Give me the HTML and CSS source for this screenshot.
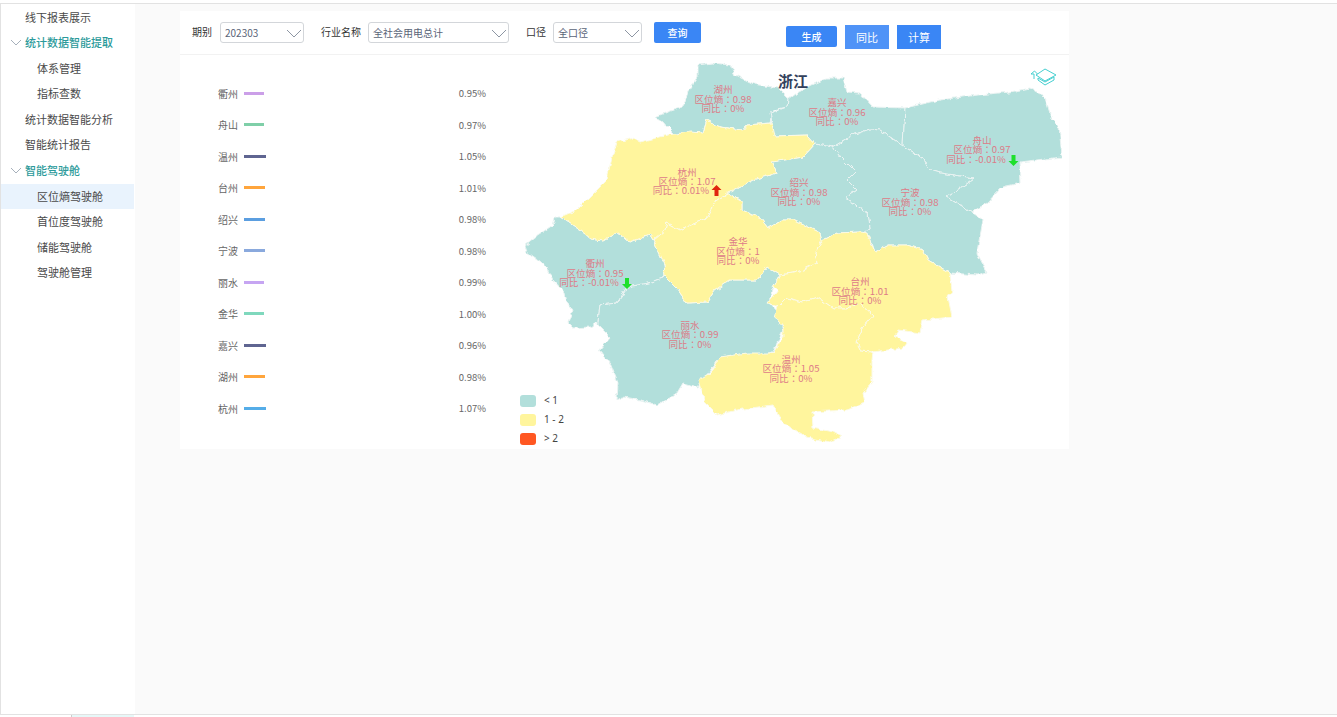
FILE: index.html
```html
<!DOCTYPE html>
<html lang="zh-CN">
<head>
<meta charset="utf-8">
<title>区位熵驾驶舱</title>
<link rel="stylesheet" href="styles.css">
</head>
<body>
<div class="frame">
  <nav class="sidebar">
    <div class="item">线下报表展示</div>
    <div class="item group"><svg class="caret" viewBox="0 0 12 7"><path d="M1 1l5 5 5-5"/></svg>统计数据智能提取</div>
    <div class="item sub">体系管理</div>
    <div class="item sub">指标查数</div>
    <div class="item">统计数据智能分析</div>
    <div class="item">智能统计报告</div>
    <div class="item group"><svg class="caret" viewBox="0 0 12 7"><path d="M1 1l5 5 5-5"/></svg>智能驾驶舱</div>
    <div class="item sub active">区位熵驾驶舱</div>
    <div class="item sub">首位度驾驶舱</div>
    <div class="item sub">储能驾驶舱</div>
    <div class="item sub">驾驶舱管理</div>
  </nav>
  <main class="main">
    <section class="panel">
      <header class="toolbar">
        <span class="lbl">期别</span>
        <div class="select w84">202303<svg class="chev" viewBox="0 0 16 9"><path d="M1 1l7 7 7-7"/></svg></div>
        <span class="lbl l2">行业名称</span>
        <div class="select w141">全社会用电总计<svg class="chev" viewBox="0 0 16 9"><path d="M1 1l7 7 7-7"/></svg></div>
        <span class="lbl l3">口径</span>
        <div class="select w89">全口径<svg class="chev" viewBox="0 0 16 9"><path d="M1 1l7 7 7-7"/></svg></div>
        <button class="btn query">查询</button>
        <div class="actions">
          <button class="btn gen">生成</button>
          <button class="btn square light">同比</button>
          <button class="btn square">计算</button>
        </div>
      </header>
      <div class="body">
        <ul class="legend">
          <li><span class="name">衢州</span><i class="bar c1"></i><span class="val">0.95%</span></li>
          <li><span class="name">舟山</span><i class="bar c2"></i><span class="val">0.97%</span></li>
          <li><span class="name">温州</span><i class="bar c3"></i><span class="val">1.05%</span></li>
          <li><span class="name">台州</span><i class="bar c4"></i><span class="val">1.01%</span></li>
          <li><span class="name">绍兴</span><i class="bar c5"></i><span class="val">0.98%</span></li>
          <li><span class="name">宁波</span><i class="bar c6"></i><span class="val">0.98%</span></li>
          <li><span class="name">丽水</span><i class="bar c7"></i><span class="val">0.99%</span></li>
          <li><span class="name">金华</span><i class="bar c8"></i><span class="val">1.00%</span></li>
          <li><span class="name">嘉兴</span><i class="bar c3"></i><span class="val">0.96%</span></li>
          <li><span class="name">湖州</span><i class="bar c4"></i><span class="val">0.98%</span></li>
          <li><span class="name">杭州</span><i class="bar c9"></i><span class="val">1.07%</span></li>
        </ul>
        <svg class="map" viewBox="180 55 889 394">
          <defs>
            <filter id="rough" x="0" y="0" width="100%" height="100%" color-interpolation-filters="sRGB">
              <feTurbulence type="fractalNoise" baseFrequency="0.16" numOctaves="2" seed="4" result="n"/>
              <feDisplacementMap in="SourceGraphic" in2="n" scale="5" xChannelSelector="R" yChannelSelector="G"/>
            </filter>
          </defs>
          <g class="land" filter="url(#rough)">
            <g class="teal">
              <polygon points="698,65 712,63 730,65 735,75 753,84 778,88 788,98 787,107 773,110 770,123 747,125 743,130 720,127 707,120 703,132 675,135 668,128 663,122 655,117 665,113 683,107 688,92 698,77"/>
              <polygon points="788,100 797,93 812,85 827,78 843,78 847,92 860,93 873,107 905,108 903,146 880,130 870,129 853,135 833,147 815,144 807,135 773,136 772,123 770,113 787,107"/>
              <polygon points="905,108 940,100 977,95 1010,92 1030,88 1045,97 1052,120 1059,127 1062,157 1020,162 1021,183 1002,187 987,203 972,212 947,197 974,178 940,173 930,170 923,158 903,146"/>
              <polygon points="833,147 853,135 870,129 880,130 903,146 923,158 930,170 940,173 974,178 947,197 972,212 983,220 977,253 987,272 977,275 950,273 928,260 923,250 907,245 888,245 875,252 872,243 863,233 870,228 868,213 845,198 857,190 847,180 855,172 840,157"/>
              <polygon points="815,144 833,147 840,157 855,172 847,180 857,190 845,198 868,213 870,228 863,233 860,232 837,233 822,240 820,233 793,220 783,220 768,228 760,218 742,210 742,202 728,193 753,180 777,173 772,162 803,157"/>
              <polygon points="555,217 560,217 580,230 590,238 603,240 617,232 630,242 650,235 655,243 664,263 665,277 648,283 628,287 617,303 600,305 598,322 590,327 573,328 568,323 573,310 567,303 565,293 553,280 547,267 527,253 525,245 535,237 553,225"/>
              <polygon points="665,277 670,282 678,290 687,303 707,302 715,290 730,280 757,280 767,267 780,275 772,290 769,303 778,313 783,330 773,352 757,357 720,357 698,387 683,383 677,393 657,405 640,400 623,397 617,400 618,383 610,363 599,350 610,337 598,325 598,322 600,305 617,303 628,287 648,283"/>
            </g>
            <g class="yellow">
              <polygon points="560,217 577,210 590,197 607,180 613,153 617,142 633,138 640,142 668,135 690,132 703,133 707,120 720,127 743,130 747,125 772,123 775,136 807,135 815,144 803,157 772,162 777,173 753,180 728,193 717,200 707,218 680,230 667,223 665,230 653,240 650,235 630,242 617,232 603,240 590,238 580,230"/>
              <polygon points="653,240 665,230 667,223 680,230 707,218 717,200 728,193 742,202 742,210 760,218 768,228 783,220 793,220 820,233 822,240 815,253 817,263 803,270 793,273 780,275 767,267 757,280 730,280 715,290 707,302 687,303 678,290 670,282 665,277 664,263 655,243"/>
              <polygon points="780,275 793,273 803,270 817,263 815,253 822,240 837,233 860,232 867,233 875,252 888,245 907,245 923,250 928,260 950,273 952,292 948,297 952,317 923,320 920,333 898,330 895,337 908,342 903,348 873,352 860,351 856,343 863,327 873,315 860,303 847,308 833,308 817,297 803,302 787,298 778,307 768,303 778,290 773,287"/>
              <polygon points="778,307 787,298 803,302 817,297 833,308 847,308 860,303 873,315 863,327 856,343 860,351 873,352 872,360 872,383 863,393 865,403 847,410 812,412 813,428 833,432 842,437 830,442 807,437 783,423 773,405 737,410 717,415 705,403 698,380 710,373 720,357 747,353 773,353 783,337 783,327 775,317"/>
            </g>
          </g>
          <g class="names" lang="zh-Hant" transform="translate(0 0.7)">
            <text><tspan x="723" y="92">湖州</tspan><tspan x="723" y="102">区位熵：0.98</tspan><tspan x="723" y="111">同比：0%</tspan></text>
            <text><tspan x="837" y="105">嘉兴</tspan><tspan x="837" y="115">区位熵：0.96</tspan><tspan x="837" y="124">同比：0%</tspan></text>
            <text><tspan x="982" y="143">舟山</tspan><tspan x="982" y="152">区位熵：0.97</tspan><tspan x="976" y="162">同比：-0.01%</tspan></text>
            <text><tspan x="687" y="175">杭州</tspan><tspan x="687" y="184">区位熵：1.07</tspan><tspan x="681" y="193">同比：0.01%</tspan></text>
            <text><tspan x="799" y="185">绍兴</tspan><tspan x="799" y="195">区位熵：0.98</tspan><tspan x="799" y="204">同比：0%</tspan></text>
            <text><tspan x="910" y="195">宁波</tspan><tspan x="910" y="205">区位熵：0.98</tspan><tspan x="910" y="214">同比：0%</tspan></text>
            <text><tspan x="738" y="244">金华</tspan><tspan x="738" y="254">区位熵：1</tspan><tspan x="738" y="263">同比：0%</tspan></text>
            <text><tspan x="595" y="266">衢州</tspan><tspan x="595" y="276">区位熵：0.95</tspan><tspan x="589" y="285">同比：-0.01%</tspan></text>
            <text><tspan x="690" y="328">丽水</tspan><tspan x="690" y="337">区位熵：0.99</tspan><tspan x="690" y="347">同比：0%</tspan></text>
            <text><tspan x="860" y="284">台州</tspan><tspan x="860" y="294">区位熵：1.01</tspan><tspan x="860" y="303">同比：0%</tspan></text>
            <text><tspan x="791" y="362">温州</tspan><tspan x="791" y="371">区位熵：1.05</tspan><tspan x="791" y="381">同比：0%</tspan></text>
          </g>
          <path class="up" d="M716.500 185l5 5h-3v6h-4v-6h-3z"/>
          <path class="down" d="M1011.500 155h4v6h3l-5 5-5-5h3z"/>
          <path class="down" d="M625 278h4v6h3l-5 5-5-5h3z"/>
          <text class="title" x="793" y="87">浙江</text>
          <g class="tool">
            <path d="M1036 75l9-6 11 6-11 6z"/>
            <path d="M1038 78v2l7 5 9-5v-3l-9 5-7-4"/>
            <path d="M1034 79v-5h-3l3.500-3 3 3"/>
          </g>
          <g class="keys">
            <rect class="k1" x="520" y="395" width="16" height="12" rx="3"/><text x="544" y="404">&lt; 1</text>
            <rect class="k2" x="520" y="414" width="16" height="12" rx="3"/><text x="544" y="423">1 - 2</text>
            <rect class="k3" x="520" y="433" width="16" height="12" rx="3"/><text x="544" y="442">&gt; 2</text>
          </g>
        </svg>
      </div>
    </section>
  </main>
</div>
<div class="foot"><span class="foot-tab"></span></div>
</body>
</html>
```
FILE: styles.css
```css
* { box-sizing: border-box; }
html, body { margin: 0; height: 100%; background: #fff; overflow: hidden; }
body { font-family: "Noto Sans CJK SC", "Noto Sans", sans-serif; color: #444; font-size: 11px; padding-top: 3px; }
.frame { display: flex; height: 712px; border: 1px solid #e2e2e2; border-width: 1px 0 1px 1px; }
.sidebar { width: 134px; flex: none; background: #fff; padding-top: 0.5px; }
.item { height: 25.6px; line-height: 25.6px; padding-left: 24px; position: relative; white-space: nowrap; color: #4a4a4a; }
.item.sub { padding-left: 36px; }
.item.group { color: #2b9a9a; font-weight: 500; }
.item.active { background: #e9f3fd; width: 133px; }
.caret { position: absolute; left: 9px; top: 9px; width: 12px; height: 7px; fill: none; stroke: #a6b0bb; stroke-width: 1; }
.main { flex: 1; background: #fafafa; padding: 7px 0 0 45px; }
.panel { width: 889px; height: 438px; background: #fff; }
.toolbar { display: flex; align-items: flex-start; height: 44px; border-bottom: 1px solid #f2f2f2; padding: 11px 0 0 12px; position: relative; }
.lbl { font-size: 10px; line-height: 20px; color: #333; }
.l2 { margin-left: 17px; }
.l3 { margin-left: 17px; }
.select { height: 21px; margin-left: 7px; border: 1px solid #d3d6da; border-radius: 3px; padding-left: 4px; font-size: 10px; line-height: 19px; color: #5a6478; position: relative; }
.w84 { width: 84px; margin-left: 8px; }
.w141 { width: 141px; }
.w89 { width: 89px; }
.chev { position: absolute; right: 1px; top: 6px; width: 16px; height: 9px; fill: none; stroke: #8d96a3; stroke-width: 1; }
.btn { border: 0; background: #3a86f5; color: #fff; font: 500 10px "Noto Sans CJK SC", sans-serif; border-radius: 2px; padding: 0; }
.query { width: 47px; height: 21px; margin-left: 12px; }
.actions { display: flex; gap: 8px; margin-left: 85px; padding-top: 4px; }
.gen { width: 51px; height: 21px; }
.square { width: 44px; height: 24px; font-size: 11px; font-weight: 400; border-radius: 0; margin-top: -1px; }
.light { background: #4f93f7; }
.body { position: relative; height: 394px; }
.legend { list-style: none; margin: 0; padding: 22.5px 0 0 38px; width: 306px; position: relative; z-index: 1; }
.legend li { display: flex; align-items: center; height: 31.5px; font-size: 10px; color: #666; }
.name { width: 26px; }
.bar { width: 20px; height: 3px; display: block; }
.val { margin-left: auto; font-size: 9.5px; }
.c1 { background: #cb9fe8; }
.c2 { background: #7fcfa8; }
.c3 { background: #5f6591; width: 22px; }
.c4 { background: #ffa53c; width: 21px; }
.c5 { background: #5b9ee0; width: 21px; }
.c6 { background: #8aa9dd; width: 21px; }
.c7 { background: #c6a5f2; }
.c8 { background: #7fd8bd; }
.c9 { background: #55ade8; width: 22px; }
.map { position: absolute; left: 0; top: 0; width: 889px; height: 394px; }
.teal polygon { fill: #b2dfdb; stroke: #eaf3f2; stroke-width: 1; }
.yellow polygon { fill: #fff59d; stroke: #fbfae6; stroke-width: 1; }
.names text { font: 9.6px "Noto Sans CJK TC", "Noto Sans CJK SC", sans-serif; fill: #dd7b88; text-anchor: middle; }
.up { fill: #e0250f; }
.down { fill: #1de02c; }
.title { font: 700 15px "Noto Sans CJK SC", sans-serif; fill: #33415c; text-anchor: middle; }
.tool path { fill: none; stroke: #46cfd0; stroke-width: 1; }
.keys text { font: 10px "Noto Sans", sans-serif; fill: #444; }
.k1 { fill: #b2dfdb; }
.k2 { fill: #fff59d; }
.k3 { fill: #ff5722; }
.foot { height: 2px; padding-left: 71px; }
.foot-tab { display: block; width: 63px; height: 2px; background: #e6f8f8; border-left: 1px solid #ccc; }
```
